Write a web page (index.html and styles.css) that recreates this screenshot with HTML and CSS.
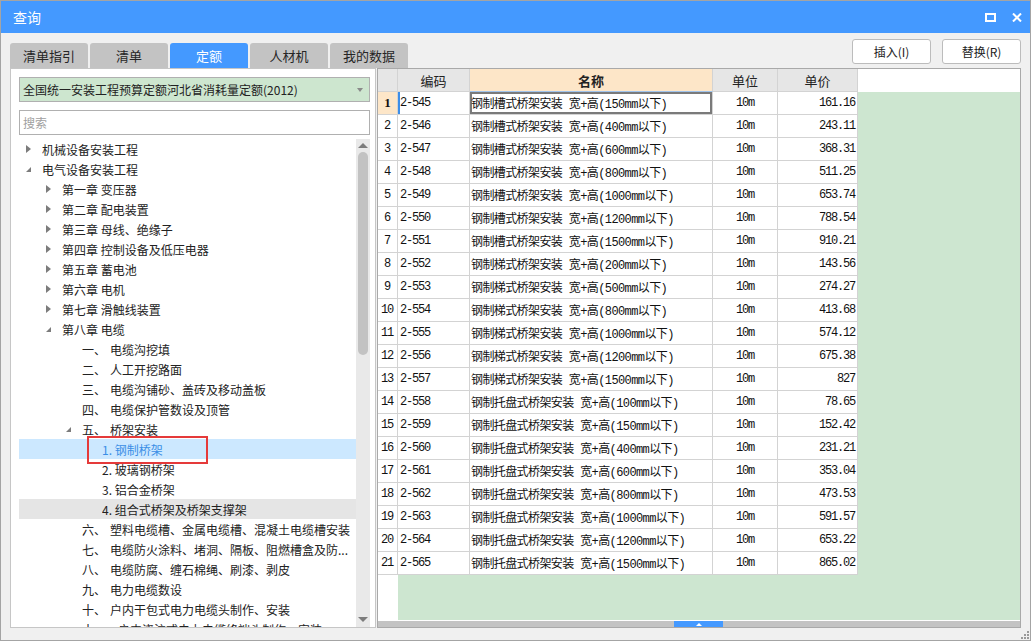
FILE: index.html
```html
<!DOCTYPE html>
<html lang="zh-CN">
<head>
<meta charset="utf-8">
<title>查询</title>
<link rel="stylesheet" href="styles.css">
</head>
<body>
<div class="window">
  <div class="titlebar">
    <div class="title">查询</div>
    <div class="win-btns">
      <svg class="ico-max" width="11" height="9" viewBox="0 0 11 9"><rect x="1" y="1" width="9" height="7" fill="none" stroke="#fff" stroke-width="2"/></svg>
      <svg class="ico-close" width="10" height="9" viewBox="0 0 10 9"><path d="M1 0.5 L9 8.5 M9 0.5 L1 8.5" stroke="#fff" stroke-width="2"/></svg>
    </div>
  </div>

  <div class="toolbar">
    <div class="tabs">
      <div class="tab">清单指引</div>
      <div class="tab">清单</div>
      <div class="tab active">定额</div>
      <div class="tab">人材机</div>
      <div class="tab">我的数据</div>
    </div>
    <div class="actions">
      <button class="btn">插入(I)</button>
      <button class="btn">替换(R)</button>
    </div>
  </div>

  <div class="main">
    <div class="left-panel">
      <div class="select">
        <span class="select-text">全国统一安装工程预算定额河北省消耗量定额(2012)</span>
        <span class="caret"></span>
      </div>
      <div class="search">搜索</div>
      <div class="tree">
        <div class="tree-list">
          <div class="row lv0"><span class="tw closed"></span><span class="txt">机械设备安装工程</span></div>
          <div class="row lv0"><span class="tw open"></span><span class="txt">电气设备安装工程</span></div>
          <div class="row lv1"><span class="tw closed"></span><span class="txt">第一章 变压器</span></div>
          <div class="row lv1"><span class="tw closed"></span><span class="txt">第二章 配电装置</span></div>
          <div class="row lv1"><span class="tw closed"></span><span class="txt">第三章 母线、绝缘子</span></div>
          <div class="row lv1"><span class="tw closed"></span><span class="txt">第四章 控制设备及低压电器</span></div>
          <div class="row lv1"><span class="tw closed"></span><span class="txt">第五章 蓄电池</span></div>
          <div class="row lv1"><span class="tw closed"></span><span class="txt">第六章 电机</span></div>
          <div class="row lv1"><span class="tw closed"></span><span class="txt">第七章 滑触线装置</span></div>
          <div class="row lv1"><span class="tw open"></span><span class="txt">第八章 电缆</span></div>
          <div class="row lv2"><span class="tw"></span><span class="txt"><span class="num">一、</span>电缆沟挖填</span></div>
          <div class="row lv2"><span class="tw"></span><span class="txt"><span class="num">二、</span>人工开挖路面</span></div>
          <div class="row lv2"><span class="tw"></span><span class="txt"><span class="num">三、</span>电缆沟铺砂、盖砖及移动盖板</span></div>
          <div class="row lv2"><span class="tw"></span><span class="txt"><span class="num">四、</span>电缆保护管数设及顶管</span></div>
          <div class="row lv2"><span class="tw open"></span><span class="txt"><span class="num">五、</span>桥架安装</span></div>
          <div class="row lv3 selected"><span class="tw"></span><span class="txt">1. 钢制桥架</span><span class="mark"></span></div>
          <div class="row lv3"><span class="tw"></span><span class="txt">2. 玻璃钢桥架</span></div>
          <div class="row lv3"><span class="tw"></span><span class="txt">3. 铝合金桥架</span></div>
          <div class="row lv3 hover"><span class="tw"></span><span class="txt">4. 组合式桥架及桥架支撑架</span></div>
          <div class="row lv2"><span class="tw"></span><span class="txt"><span class="num">六、</span>塑料电缆槽、金属电缆槽、混凝土电缆槽安装</span></div>
          <div class="row lv2"><span class="tw"></span><span class="txt"><span class="num">七、</span>电缆防火涂料、堵洞、隔板、阻燃槽盒及防...</span></div>
          <div class="row lv2"><span class="tw"></span><span class="txt"><span class="num">八、</span>电缆防腐、缠石棉绳、刷漆、剥皮</span></div>
          <div class="row lv2"><span class="tw"></span><span class="txt"><span class="num">九、</span>电力电缆数设</span></div>
          <div class="row lv2"><span class="tw"></span><span class="txt"><span class="num">十、</span>户内干包式电力电缆头制作、安装</span></div>
          <div class="row lv2"><span class="tw"></span><span class="txt"><span class="num">十一、</span>户内浇注式电力电缆终端头制作、安装</span></div>
        </div>
        <div class="vscroll">
          <span class="arr-up"></span>
          <span class="vthumb"></span>
          <span class="vspace"></span>
          <span class="arr-down"></span>
        </div>
      </div>
    </div>

    <div class="grid">
      <div class="grow head">
        <div class="c c0"></div>
        <div class="c c1">编码</div>
        <div class="c c2 hl">名称</div>
        <div class="c c3">单位</div>
        <div class="c c4">单价</div>
        <div class="fill"></div>
      </div>
      <div class="grow first">
        <div class="c c0">1</div><div class="c c1">2-545</div><div class="c c2">钢制槽式桥架安装 宽+高(150mm以下)</div><div class="c c3">10m</div><div class="c c4">161.16</div><div class="fill"></div>
      </div>
      <div class="grow"><div class="c c0">2</div><div class="c c1">2-546</div><div class="c c2">钢制槽式桥架安装 宽+高(400mm以下)</div><div class="c c3">10m</div><div class="c c4">243.11</div><div class="fill"></div></div>
      <div class="grow"><div class="c c0">3</div><div class="c c1">2-547</div><div class="c c2">钢制槽式桥架安装 宽+高(600mm以下)</div><div class="c c3">10m</div><div class="c c4">368.31</div><div class="fill"></div></div>
      <div class="grow"><div class="c c0">4</div><div class="c c1">2-548</div><div class="c c2">钢制槽式桥架安装 宽+高(800mm以下)</div><div class="c c3">10m</div><div class="c c4">511.25</div><div class="fill"></div></div>
      <div class="grow"><div class="c c0">5</div><div class="c c1">2-549</div><div class="c c2">钢制槽式桥架安装 宽+高(1000mm以下)</div><div class="c c3">10m</div><div class="c c4">653.74</div><div class="fill"></div></div>
      <div class="grow"><div class="c c0">6</div><div class="c c1">2-550</div><div class="c c2">钢制槽式桥架安装 宽+高(1200mm以下)</div><div class="c c3">10m</div><div class="c c4">788.54</div><div class="fill"></div></div>
      <div class="grow"><div class="c c0">7</div><div class="c c1">2-551</div><div class="c c2">钢制槽式桥架安装 宽+高(1500mm以下)</div><div class="c c3">10m</div><div class="c c4">910.21</div><div class="fill"></div></div>
      <div class="grow"><div class="c c0">8</div><div class="c c1">2-552</div><div class="c c2">钢制梯式桥架安装 宽+高(200mm以下)</div><div class="c c3">10m</div><div class="c c4">143.56</div><div class="fill"></div></div>
      <div class="grow"><div class="c c0">9</div><div class="c c1">2-553</div><div class="c c2">钢制梯式桥架安装 宽+高(500mm以下)</div><div class="c c3">10m</div><div class="c c4">274.27</div><div class="fill"></div></div>
      <div class="grow"><div class="c c0">10</div><div class="c c1">2-554</div><div class="c c2">钢制梯式桥架安装 宽+高(800mm以下)</div><div class="c c3">10m</div><div class="c c4">413.68</div><div class="fill"></div></div>
      <div class="grow"><div class="c c0">11</div><div class="c c1">2-555</div><div class="c c2">钢制梯式桥架安装 宽+高(1000mm以下)</div><div class="c c3">10m</div><div class="c c4">574.12</div><div class="fill"></div></div>
      <div class="grow"><div class="c c0">12</div><div class="c c1">2-556</div><div class="c c2">钢制梯式桥架安装 宽+高(1200mm以下)</div><div class="c c3">10m</div><div class="c c4">675.38</div><div class="fill"></div></div>
      <div class="grow"><div class="c c0">13</div><div class="c c1">2-557</div><div class="c c2">钢制梯式桥架安装 宽+高(1500mm以下)</div><div class="c c3">10m</div><div class="c c4">827</div><div class="fill"></div></div>
      <div class="grow"><div class="c c0">14</div><div class="c c1">2-558</div><div class="c c2">钢制托盘式桥架安装 宽+高(100mm以下)</div><div class="c c3">10m</div><div class="c c4">78.65</div><div class="fill"></div></div>
      <div class="grow"><div class="c c0">15</div><div class="c c1">2-559</div><div class="c c2">钢制托盘式桥架安装 宽+高(150mm以下)</div><div class="c c3">10m</div><div class="c c4">152.42</div><div class="fill"></div></div>
      <div class="grow"><div class="c c0">16</div><div class="c c1">2-560</div><div class="c c2">钢制托盘式桥架安装 宽+高(400mm以下)</div><div class="c c3">10m</div><div class="c c4">231.21</div><div class="fill"></div></div>
      <div class="grow"><div class="c c0">17</div><div class="c c1">2-561</div><div class="c c2">钢制托盘式桥架安装 宽+高(600mm以下)</div><div class="c c3">10m</div><div class="c c4">353.04</div><div class="fill"></div></div>
      <div class="grow"><div class="c c0">18</div><div class="c c1">2-562</div><div class="c c2">钢制托盘式桥架安装 宽+高(800mm以下)</div><div class="c c3">10m</div><div class="c c4">473.53</div><div class="fill"></div></div>
      <div class="grow"><div class="c c0">19</div><div class="c c1">2-563</div><div class="c c2">钢制托盘式桥架安装 宽+高(1000mm以下)</div><div class="c c3">10m</div><div class="c c4">591.57</div><div class="fill"></div></div>
      <div class="grow"><div class="c c0">20</div><div class="c c1">2-564</div><div class="c c2">钢制托盘式桥架安装 宽+高(1200mm以下)</div><div class="c c3">10m</div><div class="c c4">653.22</div><div class="fill"></div></div>
      <div class="grow"><div class="c c0">21</div><div class="c c1">2-565</div><div class="c c2">钢制托盘式桥架安装 宽+高(1500mm以下)</div><div class="c c3">10m</div><div class="c c4">865.02</div><div class="fill"></div></div>
      <div class="filler">
        <div class="filler-left"></div>
        <div class="filler-green"></div>
      </div>
      <div class="hscroll">
        <div class="hthumb"><span class="hthumb-arrow"></span></div>
      </div>
    </div>
  </div>

  <div class="status">
    <svg class="grip" width="8" height="8" viewBox="0 0 8 8">
      <rect x="6" y="0" width="2" height="2" fill="#9a9a9a"/>
      <rect x="3" y="3" width="2" height="2" fill="#9a9a9a"/>
      <rect x="6" y="3" width="2" height="2" fill="#9a9a9a"/>
      <rect x="0" y="6" width="2" height="2" fill="#9a9a9a"/>
      <rect x="3" y="6" width="2" height="2" fill="#9a9a9a"/>
      <rect x="6" y="6" width="2" height="2" fill="#9a9a9a"/>
    </svg>
  </div>
</div>
</body>
</html>
```

FILE: styles.css
```css
* { box-sizing: border-box; }

body {
  margin: 0;
  background: #f0f0f0;
  font-family: "Noto Sans CJK SC", "Noto Sans", sans-serif;
  font-size: 12px;
  color: #222;
}

.window {
  width: 1031px;
  height: 641px;
  border: 1px solid #a4a4a4;
  display: flex;
  flex-direction: column;
  background: #f0f0f0;
  overflow: hidden;
}

/* title bar */
.titlebar {
  height: 32px;
  flex: none;
  background: #4499ff;
  color: #fff;
  display: flex;
  align-items: center;
  padding-left: 12px;
  font-size: 14px;
}
.title { flex: 1; }
.win-btns {
  display: flex;
  align-items: center;
  gap: 16px;
  padding-right: 8px;
}

/* toolbar with tabs and buttons */
.toolbar {
  height: 35px;
  flex: none;
  display: flex;
  justify-content: space-between;
  padding: 0 9px;
}
.tabs {
  display: flex;
  gap: 2px;
  align-self: flex-end;
}
.tab {
  width: 78px;
  height: 25px;
  background: #c3c3c3;
  border-radius: 3px 3px 0 0;
  display: flex;
  align-items: center;
  justify-content: center;
  font-size: 13px;
  color: #262626;
}
.tab.active {
  background: #4499ff;
  color: #fff;
}
.actions {
  display: flex;
  gap: 11px;
  padding-top: 6px;
}
.btn {
  width: 79px;
  height: 25px;
  background: #fff;
  border: 1px solid #bcbcbc;
  border-radius: 3px;
  font-family: inherit;
  font-size: 12px;
  color: #222;
  padding: 0;
}

/* main area */
.main {
  height: 560px;
  flex: none;
  display: flex;
  gap: 1px;
  padding: 0 9px;
}

.left-panel {
  width: 366px;
  flex: none;
  background: #fff;
  border: 1px solid #c6c6c6;
  padding: 8px 5px 0 8px;
  display: flex;
  flex-direction: column;
}
.select {
  height: 25px;
  flex: none;
  border: 1px solid #b0b0b0;
  background: #cde6cf;
  display: flex;
  align-items: center;
  padding: 0 6px 0 3px;
  font-size: 12px;
}
.select-text { flex: 1; }
.caret {
  width: 0;
  height: 0;
  border-left: 3px solid transparent;
  border-right: 3px solid transparent;
  border-top: 4px solid #8a8a8a;
}
.search {
  margin-top: 8px;
  height: 25px;
  flex: none;
  border: 1px solid #b0b0b0;
  color: #a0a0a0;
  display: flex;
  align-items: center;
  padding-left: 3px;
  font-size: 12px;
}

.tree {
  margin-top: 4px;
  flex: 1;
  min-height: 0;
  display: flex;
}
.tree-list {
  width: 337px;
  flex: none;
  overflow: hidden;
}
.row {
  height: 20px;
  display: flex;
  align-items: center;
  white-space: nowrap;
  padding-right: 2px;
  position: relative;
}
.lv0 { padding-left: 0; }
.lv1 { padding-left: 20px; }
.lv2 { padding-left: 40px; }
.lv3 { padding-left: 60px; }
.tw {
  width: 23px;
  height: 20px;
  flex: none;
  position: relative;
}
.tw.closed::before {
  content: "";
  position: absolute;
  left: 7px;
  top: 6px;
  border-left: 5px solid #7c7c7c;
  border-top: 4px solid transparent;
  border-bottom: 4px solid transparent;
}
.tw.open::before {
  content: "";
  position: absolute;
  left: 7px;
  top: 8px;
  border-bottom: 5px solid #7c7c7c;
  border-left: 5px solid transparent;
}
.txt {
  overflow: hidden;
  min-width: 0;
}
.num {
  display: inline-block;
  min-width: 28px;
}
.row.selected {
  background: #cce8ff;
  color: #3a8ee6;
}
.row.hover {
  background: #e5e5e5;
}
.mark {
  position: absolute;
  left: 68px;
  top: -3px;
  width: 121px;
  height: 28px;
  border: 2px solid #e53a3a;
}

.vscroll {
  width: 14px;
  flex: none;
  background: #e9e9e9;
  display: flex;
  flex-direction: column;
  align-items: center;
}
.arr-up {
  margin-top: 4px;
  border-bottom: 5px solid #7c7c7c;
  border-left: 5px solid transparent;
  border-right: 5px solid transparent;
}
.vthumb {
  margin-top: 4px;
  width: 10px;
  height: 203px;
  border-radius: 5px;
  background: #c2c2c2;
}
.vspace { flex: 1; }
.arr-down {
  margin-bottom: 5px;
  border-top: 5px solid #7c7c7c;
  border-left: 5px solid transparent;
  border-right: 5px solid transparent;
}

/* grid */
.grid {
  width: 644px;
  flex: none;
  border: 1px solid #a9a9a9;
  background: #fff;
  display: flex;
  flex-direction: column;
}
.grow {
  height: 23px;
  flex: none;
  display: flex;
}
.c {
  height: 23px;
  border-right: 1px solid #d3d3d3;
  border-bottom: 1px solid #d3d3d3;
  display: flex;
  align-items: center;
  white-space: nowrap;
  overflow: hidden;
  font-family: "Liberation Mono", "Noto Sans CJK SC", monospace;
  font-size: 12px;
  color: #111;
}
.c0 { width: 20px; justify-content: center; letter-spacing: -1.2px; padding-right: 1px; }
.c1 { width: 72px; padding-left: 2px; letter-spacing: -1.2px; }
.c2 { width: 243px; padding-left: 1px; letter-spacing: -0.6px; }
.c3 { width: 65px; justify-content: center; letter-spacing: -1.2px; }
.c4 { width: 80px; justify-content: flex-end; padding-right: 2px; letter-spacing: -1.2px; }
.fill {
  flex: 1;
  background: #cde6d0;
}

.head .c {
  background: #e6e6e6;
  justify-content: center;
  font-family: "Noto Sans CJK SC", "Noto Sans", sans-serif;
  font-size: 13px;
  letter-spacing: 0;
  color: #222;
  padding: 0;
}
.head .c.hl {
  background: #fde6c8;
  font-weight: bold;
  border-bottom-color: #9fc3ec;
}
.head .fill { background: #fff; }

.first .c0 {
  background: #fde6c8;
  font-family: "Liberation Serif", serif;
  font-weight: bold;
  font-size: 13px;
}
.first .c1 { box-shadow: inset 2px 0 0 #3d8ee8; }
.first .c2 { box-shadow: inset 0 0 0 2px #7a7a7a; }

.filler {
  flex: 1;
  display: flex;
  margin-bottom: 1px;
}
.filler-left { width: 20px; background: #fff; }
.filler-green { flex: 1; background: #cde6d0; }

.hscroll {
  height: 6px;
  flex: none;
  background: #c3c3c3;
  position: relative;
}
.hthumb {
  position: absolute;
  left: 296px;
  top: 0;
  width: 49px;
  height: 6px;
  background: #4499ff;
  display: flex;
  justify-content: center;
  align-items: center;
}
.hthumb-arrow {
  border-bottom: 3px solid #fff;
  border-left: 3px solid transparent;
  border-right: 3px solid transparent;
}

.status {
  flex: 1;
  display: flex;
  justify-content: flex-end;
  align-items: flex-end;
  padding: 0 1px 1px 0;
}
```
